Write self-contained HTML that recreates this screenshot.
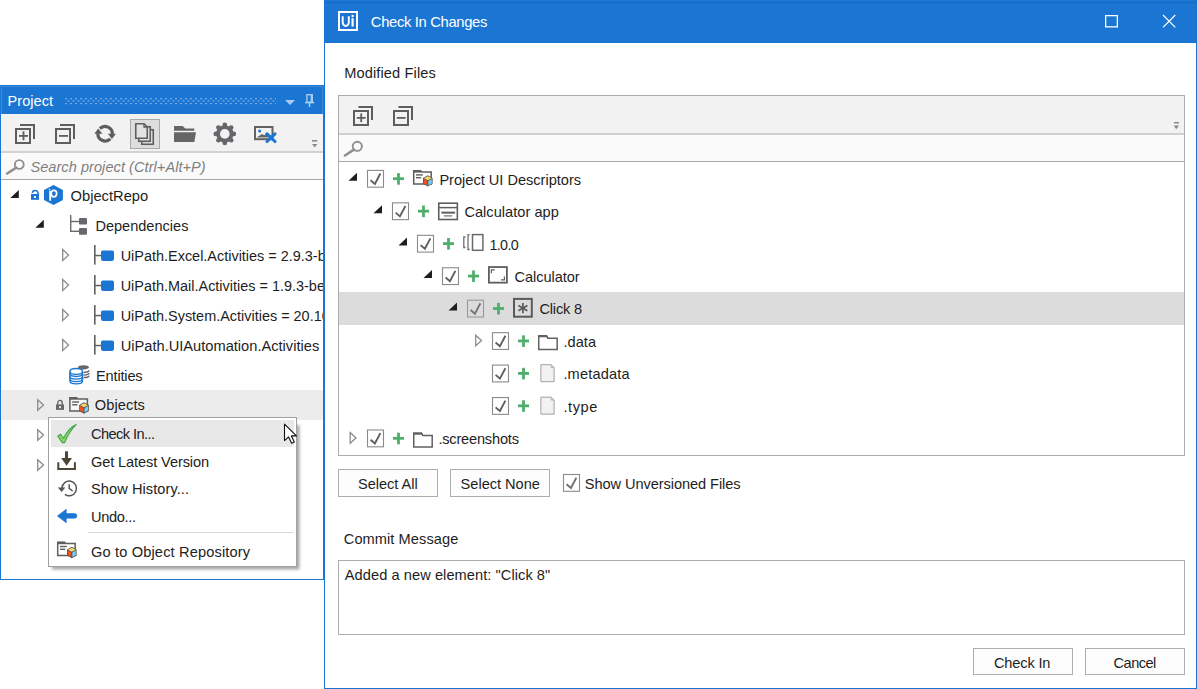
<!DOCTYPE html>
<html><head><meta charset="utf-8"><style>
html,body{margin:0;padding:0;background:#fff;width:1197px;height:689px;overflow:hidden}
svg{display:block}
text{font-family:"Liberation Sans", sans-serif;white-space:pre}
</style></head><body>
<svg width="1197" height="689" viewBox="0 0 1197 689">
<rect x="0" y="85" width="324" height="495" fill="#1a76d2" />
<rect x="1" y="86" width="322" height="493" fill="#ffffff" />
<rect x="1" y="86" width="322" height="28" fill="#1a76d2" />
<rect x="1" y="86" width="322" height="1" fill="#3f8bdb" />
<rect x="1" y="86" width="1" height="28" fill="#3f8bdb" />
<text x="7.60" y="105.6" font-size="14.5" fill="#ffffff"  textLength="45.34" lengthAdjust="spacing">Project</text>
<defs><pattern id="grip" x="65" y="98" width="5" height="5" patternUnits="userSpaceOnUse"><rect x="0" y="0" width="2" height="1.3" fill="#74aae6"/><rect x="2.5" y="2.3" width="2" height="1.3" fill="#74aae6"/></pattern></defs>
<rect x="65" y="98" width="211" height="6.5" fill="url(#grip)"/>
<path d="M285 100 L295 100 L290 105 Z" fill="#a9cbf0"/>
<rect x="306.9" y="94.7" width="5.4" height="7.6" fill="none" stroke="#a9cbf0" stroke-width="1.4"/>
<rect x="310.6" y="95" width="1.6" height="7.2" fill="#a9cbf0" />
<rect x="305" y="101.9" width="9.2" height="1.4" fill="#b4d2f2" />
<rect x="308.8" y="103" width="1.4" height="4" fill="#b4d2f2" />
<rect x="322" y="86" width="1" height="28" fill="#3f8bdb" />
<rect x="1" y="114" width="322" height="37" fill="#f2f2f2" />
<rect x="1" y="151" width="322" height="2" fill="#d2d2d2" />
<rect x="16.0" y="129.0" width="14" height="14" fill="none" stroke="#5e5e5e" stroke-width="2"/>
<rect x="20" y="124" width="15" height="2" fill="#5e5e5e" />
<rect x="33" y="124" width="2" height="15" fill="#5e5e5e" />
<rect x="19" y="135" width="9" height="1.8" fill="#5e5e5e" />
<rect x="22.6" y="131.3" width="1.8" height="9" fill="#5e5e5e" />
<rect x="56.0" y="129.0" width="14" height="14" fill="none" stroke="#5e5e5e" stroke-width="2"/>
<rect x="60" y="124" width="15" height="2" fill="#5e5e5e" />
<rect x="73" y="124" width="2" height="15" fill="#5e5e5e" />
<rect x="59" y="135" width="9" height="1.8" fill="#5e5e5e" />
<path d="M 99.89999999999999 128.5 A 7.3 7.3 0 0 1 112.3 134.29999999999998" fill="none" stroke="#5e5e5e" stroke-width="3.2"/>
<path d="M 110.3 138.89999999999998 A 7.3 7.3 0 0 1 97.89999999999999 133.1" fill="none" stroke="#5e5e5e" stroke-width="3.2"/>
<path d="M 107.89999999999999 133.7 L 115.89999999999999 133.7 L 111.89999999999999 139.0 Z" fill="#5e5e5e"/>
<path d="M 102.3 133.7 L 94.3 133.7 L 98.3 128.39999999999998 Z" fill="#5e5e5e"/>
<rect x="130" y="119" width="30" height="30" fill="#a9a9a9" />
<rect x="131" y="120" width="28" height="28" fill="#dedede" />
<rect x="141.75" y="129.75" width="11.5" height="14.5" fill="#e2e2e2" stroke="#5e5e5e" stroke-width="1.6"/>
<rect x="138.75" y="126.75" width="11.5" height="14.5" fill="#e2e2e2" stroke="#5e5e5e" stroke-width="1.6"/>
<path d="M135.75 123.75 H144 L147.25 127 V138.25 H135.75 Z" fill="#e2e2e2" stroke="#5e5e5e" stroke-width="1.6"/>
<path d="M144 123.75 V127 H147.25" fill="none" stroke="#5e5e5e" stroke-width="1.3"/>
<path d="M174 126 H182.7 L185.3 128.6 H194.3 V130.8 H174 Z" fill="#666"/>
<path d="M174 132.2 H196 L194.3 142 H174 Z" fill="#666"/>
<circle cx="224.8" cy="133.9" r="8.7" fill="#65676b"/>
<circle cx="224.80" cy="124.90" r="2.35" fill="#65676b"/>
<circle cx="231.16" cy="127.54" r="2.35" fill="#65676b"/>
<circle cx="233.80" cy="133.90" r="2.35" fill="#65676b"/>
<circle cx="231.16" cy="140.26" r="2.35" fill="#65676b"/>
<circle cx="224.80" cy="142.90" r="2.35" fill="#65676b"/>
<circle cx="218.44" cy="140.26" r="2.35" fill="#65676b"/>
<circle cx="215.80" cy="133.90" r="2.35" fill="#65676b"/>
<circle cx="218.44" cy="127.54" r="2.35" fill="#65676b"/>
<circle cx="224.8" cy="133.9" r="4.8" fill="#f2f2f2"/>
<rect x="255.0" y="127.0" width="17.5" height="12.2" fill="none" stroke="#616161" stroke-width="2"/>
<circle cx="259.6" cy="130.9" r="1.5" fill="#1a76d2"/>
<path d="M256.5 137.6 L262 134 L264.5 135.3 L266.5 132.6 L268.5 137.6 Z" fill="#666"/>
<path d="M267 133.8 L275 141.5 M275 133.8 L267 141.5" stroke="#1a76d2" stroke-width="3.1" stroke-linecap="round"/>
<rect x="312" y="140" width="5.2" height="1.6" fill="#8a8a8a" />
<path d="M312 144 H317.4 L314.7 147.6 Z" fill="#8a8a8a"/>
<rect x="1" y="153" width="322" height="26" fill="#fafafa" />
<rect x="1" y="179" width="322" height="1" fill="#a8a8a8" />
<circle cx="19.3" cy="164.5" r="4.4" fill="none" stroke="#8f8f8f" stroke-width="1.9"/>
<path d="M16.2 167.7 L7.2 173.5" stroke="#8f8f8f" stroke-width="2.6" stroke-linecap="round"/>
<text x="30.40" y="172.2" font-size="14.5" fill="#7f7f7f" font-style="italic" textLength="175.27" lengthAdjust="spacing">Search project (Ctrl+Alt+P)</text>
<clipPath id="lp"><rect x="1" y="180" width="322" height="399"/></clipPath>
<g clip-path="url(#lp)">
<rect x="1" y="390" width="322" height="30" fill="#ececec" />
<path d="M18.8 190 V198 H10.3 Z" fill="#1e1e1e"/>
<rect x="31" y="194" width="8" height="5.8" fill="#1a76d2" />
<rect x="34" y="196" width="2" height="2" fill="#ffffff" />
<path d="M32.3 192.8 A2.95 2.95 0 0 1 38.1 193.1 V194.5" fill="none" stroke="#1a76d2" stroke-width="1.5"/>
<path d="M53.5 185 L62.9 189.9 V200 L53.5 204.9 L44 200 V189.9 Z" fill="#1a76d2"/>
<path d="M50.2 200.7 V191" stroke="#fff" stroke-width="1.9"/>
<ellipse cx="53.9" cy="193.6" rx="2.75" ry="3.3" fill="none" stroke="#fff" stroke-width="1.7"/>
<circle cx="49.6" cy="189.6" r="0.8" fill="#fff"/>
<text x="70.60" y="201" font-size="14.7" fill="#1e1e1e"  textLength="77.56" lengthAdjust="spacing">ObjectRepo</text>
<path d="M43.8 219.7 V227.7 H35.3 Z" fill="#1e1e1e"/>
<rect x="70" y="215" width="1.4" height="17" fill="#66696d" />
<rect x="70" y="220.8" width="9" height="1.4" fill="#66696d" />
<rect x="70" y="230.6" width="9" height="1.4" fill="#66696d" />
<rect x="79" y="218" width="8" height="6.6" rx="1" fill="#66696d"/>
<rect x="79" y="228" width="8" height="6.8" rx="1" fill="#66696d"/>
<text x="95.40" y="230.9" font-size="14.55" fill="#1e1e1e"  textLength="93.02" lengthAdjust="spacing">Dependencies</text>
<path d="M62.7 249.5 L68.5 255.05 L62.7 260.6 Z" fill="none" stroke="#8c8c8c" stroke-width="1.3"/>
<rect x="94" y="245" width="1.6" height="19.6" fill="#606060" />
<rect x="94" y="254.8" width="7" height="1.5" fill="#606060" />
<rect x="101" y="250.5" width="13" height="10.4" rx="1.8" fill="#1a76d2"/>
<text x="120.70" y="260.9" font-size="14.45" fill="#1e1e1e" >UiPath.Excel.Activities = 2.9.3-beta</text>
<path d="M62.7 279.5 L68.5 285.05 L62.7 290.6 Z" fill="none" stroke="#8c8c8c" stroke-width="1.3"/>
<rect x="94" y="275" width="1.6" height="19.6" fill="#606060" />
<rect x="94" y="284.8" width="7" height="1.5" fill="#606060" />
<rect x="101" y="280.5" width="13" height="10.4" rx="1.8" fill="#1a76d2"/>
<text x="120.70" y="290.9" font-size="14.45" fill="#1e1e1e" >UiPath.Mail.Activities = 1.9.3-beta</text>
<path d="M62.7 309.5 L68.5 315.05 L62.7 320.6 Z" fill="none" stroke="#8c8c8c" stroke-width="1.3"/>
<rect x="94" y="305" width="1.6" height="19.6" fill="#606060" />
<rect x="94" y="314.8" width="7" height="1.5" fill="#606060" />
<rect x="101" y="310.5" width="13" height="10.4" rx="1.8" fill="#1a76d2"/>
<text x="120.70" y="320.9" font-size="14.45" fill="#1e1e1e" >UiPath.System.Activities = 20.10.0</text>
<path d="M62.7 339.5 L68.5 345.05 L62.7 350.6 Z" fill="none" stroke="#8c8c8c" stroke-width="1.3"/>
<rect x="94" y="335" width="1.6" height="19.6" fill="#606060" />
<rect x="94" y="344.8" width="7" height="1.5" fill="#606060" />
<rect x="101" y="340.5" width="13" height="10.4" rx="1.8" fill="#1a76d2"/>
<text x="120.70" y="350.9" font-size="14.65" fill="#1e1e1e" >UiPath.UIAutomation.Activities = 20.10.0</text>
<g fill="none" stroke="#1a76d2" stroke-width="1.35">
<ellipse cx="76.2" cy="371.4" rx="6.3" ry="2.9" fill="#fff"/>
<path d="M69.9 373.59999999999997 A 6.3 2.9 0 0 0 82.5 373.59999999999997"/>
<path d="M69.9 376.2 A 6.3 2.9 0 0 0 82.5 376.2"/>
<path d="M69.9 378.79999999999995 A 6.3 2.9 0 0 0 82.5 378.79999999999995"/>
<path d="M69.9 371.4 V381 A 6.3 2.9 0 0 0 82.5 381 V371.4"/>
</g>
<ellipse cx="83.5" cy="367.3" rx="5.5" ry="2.1" fill="#666"/>
<g fill="none" stroke="#666" stroke-width="1.4">
<path d="M83.5 372.40000000000003 A 5.5 2.1 0 0 0 89 370.40000000000003"/>
<path d="M83.5 375.0 A 5.5 2.1 0 0 0 89 373.0"/>
<path d="M83.5 377.6 A 5.5 2.1 0 0 0 89 375.6"/>
</g>
<text x="96.00" y="380.7" font-size="14.6" fill="#1e1e1e"  textLength="46.66" lengthAdjust="spacing">Entities</text>
<path d="M37.7 399.7 L43.5 405.0 L37.7 410.3 Z" fill="none" stroke="#8c8c8c" stroke-width="1.3"/>
<rect x="56" y="404.4" width="8" height="5.5" fill="#666" />
<rect x="59" y="406.2" width="2" height="2" fill="#ececec" />
<path d="M57.8 404.8 V402.8 A2.2 2.4 0 0 1 62.2 402.8 V404.8" fill="none" stroke="#666" stroke-width="1.4"/>
<path d="M69.9 397.90000000000003 H76.8 L78.0 399.1 H87.4 V411.1 H69.9 Z" fill="#f6f6f6" stroke="#5e5e5e" stroke-width="1.5"/>
<rect x="69.2" y="397.1" width="8" height="2.6" fill="#5e5e5e" />
<rect x="72.2" y="401.3" width="6.8" height="1.4" fill="#5e5e5e" />
<rect x="72.2" y="404.1" width="5.2" height="1.4" fill="#5e5e5e" />
<path d="M84.0 402.3 L88.8 405.0 V410.90000000000003 L84.0 413.7 L79.2 410.90000000000003 V405.0 Z" fill="#555"/>
<path d="M84.0 403.3 L87.9 405.3 L84.0 407.3 L80.1 405.3 Z" fill="#f6d865"/>
<path d="M80.0 406.1 L83.5 408.0 V412.5 L80.0 410.5 Z" fill="#f4511e"/>
<path d="M88.0 406.1 L84.5 408.0 V412.5 L88.0 410.5 Z" fill="#72cff5"/>
<text x="94.80" y="410.2" font-size="14.6" fill="#1e1e1e"  textLength="50.08" lengthAdjust="spacing">Objects</text>
<path d="M37.7 429.7 L43.5 435.0 L37.7 440.3 Z" fill="none" stroke="#8c8c8c" stroke-width="1.3"/>
<path d="M37.7 459.7 L43.5 465.0 L37.7 470.3 Z" fill="none" stroke="#8c8c8c" stroke-width="1.3"/>
</g>
<defs><filter id="sh" x="-10%" y="-10%" width="130%" height="130%"><feGaussianBlur stdDeviation="1.4"/></filter></defs>
<rect x="52" y="425" width="247.5" height="144.5" fill="#000" opacity="0.34" filter="url(#sh)"/>
<rect x="48" y="417" width="249" height="150" fill="#a0a0a0" />
<rect x="49" y="418" width="247" height="148" fill="#ffffff" />
<rect x="51" y="420" width="243" height="27" fill="#e8e8e8" />
<path d="M57.8 436.2 L60.6 434.2 L63.5 438.2 C67 431 71 426.5 76.3 424.4 C71.5 429 67.5 435.5 64.6 442.6 L62.3 442.6 Z" fill="#8fd468" stroke="#3aa84a" stroke-width="1.1" stroke-linejoin="round"/>
<text x="91.00" y="438.7" font-size="14.6" fill="#222"  textLength="63.97" lengthAdjust="spacing">Check In...</text>
<rect x="65" y="451.3" width="3" height="7.5" fill="#4b4736" />
<path d="M61.2 458 H72 L66.6 465.8 Z" fill="#4b4736"/>
<path d="M58.3 462.3 V469.1 H74.9 V462.3" fill="none" stroke="#4b4736" stroke-width="2"/>
<text x="91.00" y="466.7" font-size="14.6" fill="#222"  textLength="118.08" lengthAdjust="spacing">Get Latest Version</text>
<path d="M61.900000000000006 488.09999999999997 A 7.3 7.3 0 1 1 64.9 494.29999999999995" fill="none" stroke="#555" stroke-width="1.5"/>
<path d="M57.800000000000004 487.59999999999997 H65.4 L61.6 492.0 Z" fill="#555"/>
<path d="M69.2 484.2 V488.4 L72.60000000000001 491.0" fill="none" stroke="#555" stroke-width="1.5"/>
<text x="91.00" y="494.3" font-size="14.6" fill="#222"  textLength="98.05" lengthAdjust="spacing">Show History...</text>
<path d="M57.3 516 L66.3 509.3 V513.6 H74.6 A2.3 2.3 0 0 1 74.6 518.2 H66.3 V522.8 Z" fill="#1a76d2" stroke="#1a76d2" stroke-width="0.6" stroke-linejoin="round"/>
<text x="91.00" y="521.9" font-size="14.6" fill="#222"  textLength="45.06" lengthAdjust="spacing">Undo...</text>
<rect x="88" y="532" width="206" height="1" fill="#dadada" />
<path d="M57.7 542.4 H64.6 L65.8 543.6 H75.2 V555.6 H57.7 Z" fill="#fff" stroke="#5e5e5e" stroke-width="1.5"/>
<rect x="57" y="541.6" width="8" height="2.6" fill="#5e5e5e" />
<rect x="60" y="545.8000000000001" width="6.8" height="1.4" fill="#5e5e5e" />
<rect x="60" y="548.6" width="5.2" height="1.4" fill="#5e5e5e" />
<path d="M71.8 546.8000000000001 L76.6 549.5000000000001 V555.4000000000001 L71.8 558.2 L67.0 555.4000000000001 V549.5000000000001 Z" fill="#555"/>
<path d="M71.8 547.8000000000001 L75.7 549.8000000000001 L71.8 551.8000000000001 L67.89999999999999 549.8000000000001 Z" fill="#f6d865"/>
<path d="M67.8 550.6 L71.3 552.5000000000001 V557.0000000000001 L67.8 555.0000000000001 Z" fill="#f4511e"/>
<path d="M75.8 550.6 L72.3 552.5000000000001 V557.0000000000001 L75.8 555.0000000000001 Z" fill="#72cff5"/>
<text x="91.00" y="557" font-size="14.6" fill="#222"  textLength="159.15" lengthAdjust="spacing">Go to Object Repository</text>
<path d="M284.5 424.2 V440.6 L288.6 436.9 L291.6 443.2 L294.3 442 L291.4 435.9 L296.4 435.9 Z" fill="#fff" stroke="#111" stroke-width="1.1" stroke-linejoin="round"/>
<rect x="324" y="0" width="873" height="689" fill="#1a76d2" />
<rect x="325" y="43" width="871" height="645" fill="#ffffff" />
<rect x="324" y="2" width="872" height="1" fill="#1767bb" />
<rect x="339.0" y="12.0" width="18" height="18" fill="none" stroke="#fff" stroke-width="2"/>
<path d="M342.7 16.2 V22.6 A3 3.3 0 0 0 348.8 22.6 V16.2" fill="none" stroke="#fff" stroke-width="1.9"/>
<rect x="351.5" y="18.2" width="2.2" height="8.4" fill="#fff" />
<circle cx="352.6" cy="16" r="1.2" fill="#fff"/>
<text x="370.80" y="26.7" font-size="14.8" fill="#ffffff"  textLength="116.55" lengthAdjust="spacing">Check In Changes</text>
<rect x="1105.65" y="15.65" width="11.7" height="11.2" fill="none" stroke="#fff" stroke-width="1.3"/>
<path d="M1163 15 L1175.3 27.3 M1175.3 15 L1163 27.3" stroke="#fff" stroke-width="1.2"/>
<text x="344.20" y="77.5" font-size="14.6" fill="#1e1e1e"  textLength="91.63" lengthAdjust="spacing">Modified Files</text>
<rect x="338" y="95" width="847" height="361" fill="#acacac" />
<rect x="339" y="96" width="845" height="359" fill="#ffffff" />
<rect x="339" y="96" width="845" height="37" fill="#f2f2f2" />
<rect x="339" y="133" width="845" height="2" fill="#d0d0d0" />
<rect x="354.0" y="111.0" width="14" height="14" fill="none" stroke="#5e5e5e" stroke-width="2"/>
<rect x="358.5" y="106" width="14.5" height="2" fill="#5e5e5e" />
<rect x="371" y="106" width="2" height="14" fill="#5e5e5e" />
<rect x="356.8" y="117" width="8.8" height="1.8" fill="#5e5e5e" />
<rect x="360.3" y="113.5" width="1.8" height="8.6" fill="#5e5e5e" />
<rect x="394.0" y="111.0" width="14" height="14" fill="none" stroke="#5e5e5e" stroke-width="2"/>
<rect x="398.5" y="106" width="14.5" height="2" fill="#5e5e5e" />
<rect x="411" y="106" width="2" height="14" fill="#5e5e5e" />
<rect x="396.8" y="117" width="8.8" height="1.8" fill="#5e5e5e" />
<rect x="1174" y="122" width="5" height="1.5" fill="#8a8a8a" />
<path d="M1173.6 125.5 H1179 L1176.3 129.3 Z" fill="#8a8a8a"/>
<rect x="339" y="135" width="845" height="26" fill="#fafafa" />
<rect x="339" y="161" width="845" height="1" fill="#a8a8a8" />
<circle cx="357.3" cy="146.3" r="4.6" fill="none" stroke="#8f8f8f" stroke-width="1.9"/>
<path d="M353.9 149.7 L345 155.5" stroke="#8f8f8f" stroke-width="2.6" stroke-linecap="round"/>
<clipPath id="tb"><rect x="339" y="162" width="845" height="293"/></clipPath>
<g clip-path="url(#tb)">
<rect x="339" y="292" width="845" height="33" fill="#dcdcdc" />
<path d="M357.0 172.70000000000002 V180.70000000000002 H348.5 Z" fill="#1e1e1e"/>
<rect x="367.5" y="170.4" width="16" height="16.8" fill="#fff" stroke="#8a8a8a" stroke-width="1.1"/>
<path d="M370.6 180.20000000000002 L374.9 183.9 L380.4 173.5" fill="none" stroke="#5f5f5f" stroke-width="1.9"/>
<rect x="393" y="177.3" width="11" height="2.8" fill="#4fae6c" />
<rect x="397.1" y="173.10000000000002" width="2.8" height="11.6" fill="#4fae6c" />
<path d="M413.7 170.8 H420.6 L421.8 172.0 H431.2 V184.0 H413.7 Z" fill="#fff" stroke="#5e5e5e" stroke-width="1.5"/>
<rect x="413" y="170.0" width="8" height="2.6" fill="#5e5e5e" />
<rect x="416" y="174.2" width="6.8" height="1.4" fill="#5e5e5e" />
<rect x="416" y="177.0" width="5.2" height="1.4" fill="#5e5e5e" />
<path d="M427.8 175.2 L432.6 177.89999999999998 V183.79999999999998 L427.8 186.6 L423.0 183.79999999999998 V177.89999999999998 Z" fill="#555"/>
<path d="M427.8 176.2 L431.7 178.2 L427.8 180.2 L423.90000000000003 178.2 Z" fill="#f6d865"/>
<path d="M423.8 179.0 L427.3 180.89999999999998 V185.39999999999998 L423.8 183.39999999999998 Z" fill="#f4511e"/>
<path d="M431.8 179.0 L428.3 180.89999999999998 V185.39999999999998 L431.8 183.39999999999998 Z" fill="#72cff5"/>
<text x="439.40" y="184.60000000000002" font-size="14.6" fill="#1e1e1e"  textLength="141.72" lengthAdjust="spacing">Project UI Descriptors</text>
<path d="M382.0 205.15 V213.15 H373.5 Z" fill="#1e1e1e"/>
<rect x="392.5" y="202.85" width="16" height="16.8" fill="#fff" stroke="#8a8a8a" stroke-width="1.1"/>
<path d="M395.6 212.65 L399.9 216.35 L405.4 205.95" fill="none" stroke="#5f5f5f" stroke-width="1.9"/>
<rect x="418" y="209.75" width="11" height="2.8" fill="#4fae6c" />
<rect x="422.1" y="205.55" width="2.8" height="11.6" fill="#4fae6c" />
<rect x="438.75" y="203.2" width="18.6" height="16.3" fill="#fff" stroke="#5e5e5e" stroke-width="1.6"/>
<rect x="439" y="206.85" width="18" height="1.5" fill="#5e5e5e" />
<rect x="441.4" y="211.65" width="13.7" height="2" fill="#5e5e5e" />
<rect x="443.9" y="215.15" width="8.3" height="1.5" fill="#8a8a8a" />
<text x="464.40" y="217.05" font-size="14.6" fill="#1e1e1e"  textLength="94.41" lengthAdjust="spacing">Calculator app</text>
<path d="M407.0 237.60000000000002 V245.60000000000002 H398.5 Z" fill="#1e1e1e"/>
<rect x="417.5" y="235.3" width="16" height="16.8" fill="#fff" stroke="#8a8a8a" stroke-width="1.1"/>
<path d="M420.6 245.10000000000002 L424.9 248.8 L430.4 238.4" fill="none" stroke="#5f5f5f" stroke-width="1.9"/>
<rect x="443" y="242.20000000000002" width="11" height="2.8" fill="#4fae6c" />
<rect x="447.1" y="238.00000000000003" width="2.8" height="11.6" fill="#4fae6c" />
<path d="M465.5 237.00000000000003 H463.8 V247.50000000000003 H465.5" fill="none" stroke="#707070" stroke-width="1.3"/>
<path d="M469.7 234.70000000000002 H468 V249.50000000000003 H469.7" fill="none" stroke="#707070" stroke-width="1.3"/>
<rect x="472.5" y="234.60000000000002" width="10.4" height="15.7" fill="none" stroke="#6a6a6a" stroke-width="1.5"/>
<text x="489.40" y="249.50000000000003" font-size="14.3" fill="#1e1e1e"  textLength="29.31" lengthAdjust="spacing">1.0.0</text>
<path d="M432.0 270.05 V278.05 H423.5 Z" fill="#1e1e1e"/>
<rect x="442.5" y="267.75000000000006" width="16" height="16.8" fill="#fff" stroke="#8a8a8a" stroke-width="1.1"/>
<path d="M445.6 277.55000000000007 L449.9 281.25000000000006 L455.4 270.8500000000001" fill="none" stroke="#5f5f5f" stroke-width="1.9"/>
<rect x="468" y="274.65000000000003" width="11" height="2.8" fill="#4fae6c" />
<rect x="472.1" y="270.45000000000005" width="2.8" height="11.6" fill="#4fae6c" />
<rect x="488.9" y="267.05" width="18" height="15.6" fill="#fff" stroke="#5e5e5e" stroke-width="1.8"/>
<path d="M491.4 273.35 V269.85 H494.8" fill="none" stroke="#5e5e5e" stroke-width="1.2"/>
<path d="M501 279.85 H504.4 V276.45000000000005" fill="none" stroke="#5e5e5e" stroke-width="1.2"/>
<text x="514.40" y="281.95000000000005" font-size="14.6" fill="#1e1e1e"  textLength="65.30" lengthAdjust="spacing">Calculator</text>
<path d="M457.0 302.5 V310.5 H448.5 Z" fill="#1e1e1e"/>
<rect x="467.5" y="300.20000000000005" width="16" height="16.8" fill="#dcdcdc" stroke="#999" stroke-width="1.1"/>
<path d="M470.6 310.00000000000006 L474.9 313.70000000000005 L480.4 303.30000000000007" fill="none" stroke="#777" stroke-width="1.9"/>
<rect x="493" y="307.1" width="11" height="2.8" fill="#4fae6c" />
<rect x="497.1" y="302.90000000000003" width="2.8" height="11.6" fill="#4fae6c" />
<rect x="514" y="298.90000000000003" width="17.8" height="17.8" fill="none" stroke="#5a5a5a" stroke-width="2"/>
<path d="M522.90 302.90 L522.90 313.30" stroke="#5a5a5a" stroke-width="1.7"/>
<path d="M518.40 305.50 L527.40 310.70" stroke="#5a5a5a" stroke-width="1.7"/>
<path d="M518.40 310.70 L527.40 305.50" stroke="#5a5a5a" stroke-width="1.7"/>
<text x="539.40" y="314.40000000000003" font-size="14.6" fill="#1e1e1e"  textLength="42.70" lengthAdjust="spacing">Click 8</text>
<path d="M475.7 335.25 L481.5 340.55 L475.7 345.85 Z" fill="none" stroke="#8c8c8c" stroke-width="1.3"/>
<rect x="492.5" y="332.65000000000003" width="16" height="16.8" fill="#fff" stroke="#8a8a8a" stroke-width="1.1"/>
<path d="M495.6 342.45000000000005 L499.9 346.15000000000003 L505.4 335.75000000000006" fill="none" stroke="#5f5f5f" stroke-width="1.9"/>
<rect x="518" y="339.55" width="11" height="2.8" fill="#4fae6c" />
<rect x="522.1" y="335.35" width="2.8" height="11.6" fill="#4fae6c" />
<path d="M538.75 335.85 V349.55 H557.2 V338.15000000000003 H547.8 L546.6 335.85 Z" fill="#fff" stroke="#626262" stroke-width="1.5"/>
<path d="M538 335.25 H546.8 L548.1 337.35 H538 Z" fill="#626262"/>
<text x="563.40" y="346.85" font-size="14.6" fill="#1e1e1e"  textLength="32.67" lengthAdjust="spacing">.data</text>
<rect x="492.5" y="365.1" width="16" height="16.8" fill="#fff" stroke="#8a8a8a" stroke-width="1.1"/>
<path d="M495.6 374.90000000000003 L499.9 378.6 L505.4 368.20000000000005" fill="none" stroke="#5f5f5f" stroke-width="1.9"/>
<rect x="518" y="372.0" width="11" height="2.8" fill="#4fae6c" />
<rect x="522.1" y="367.8" width="2.8" height="11.6" fill="#4fae6c" />
<path d="M540.9 364.7 H551.1999999999999 L554.1 367.59999999999997 V381.7 H540.9 Z" fill="#f2f2f2" stroke="#a0a0a0" stroke-width="1"/>
<path d="M551.1999999999999 364.7 V367.59999999999997 H554.1" fill="none" stroke="#b0b0b0" stroke-width="1"/>
<text x="563.40" y="379.3" font-size="14.6" fill="#1e1e1e"  textLength="66.11" lengthAdjust="spacing">.metadata</text>
<rect x="492.5" y="397.55000000000007" width="16" height="16.8" fill="#fff" stroke="#8a8a8a" stroke-width="1.1"/>
<path d="M495.6 407.3500000000001 L499.9 411.05000000000007 L505.4 400.6500000000001" fill="none" stroke="#5f5f5f" stroke-width="1.9"/>
<rect x="518" y="404.45000000000005" width="11" height="2.8" fill="#4fae6c" />
<rect x="522.1" y="400.25000000000006" width="2.8" height="11.6" fill="#4fae6c" />
<path d="M540.9 397.15000000000003 H551.1999999999999 L554.1 400.05 V414.15000000000003 H540.9 Z" fill="#f2f2f2" stroke="#a0a0a0" stroke-width="1"/>
<path d="M551.1999999999999 397.15000000000003 V400.05 H554.1" fill="none" stroke="#b0b0b0" stroke-width="1"/>
<text x="563.40" y="411.75000000000006" font-size="14.6" fill="#1e1e1e"  textLength="33.94" lengthAdjust="spacing">.type</text>
<path d="M350.2 432.6 L356.0 437.90000000000003 L350.2 443.20000000000005 Z" fill="none" stroke="#8c8c8c" stroke-width="1.3"/>
<rect x="367.5" y="430.00000000000006" width="16" height="16.8" fill="#fff" stroke="#8a8a8a" stroke-width="1.1"/>
<path d="M370.6 439.80000000000007 L374.9 443.50000000000006 L380.4 433.1000000000001" fill="none" stroke="#5f5f5f" stroke-width="1.9"/>
<rect x="393" y="436.90000000000003" width="11" height="2.8" fill="#4fae6c" />
<rect x="397.1" y="432.70000000000005" width="2.8" height="11.6" fill="#4fae6c" />
<path d="M413.75 433.20000000000005 V446.90000000000003 H432.2 V435.50000000000006 H422.8 L421.6 433.20000000000005 Z" fill="#fff" stroke="#626262" stroke-width="1.5"/>
<path d="M413 432.6 H421.8 L423.1 434.70000000000005 H413 Z" fill="#626262"/>
<text x="438.40" y="444.20000000000005" font-size="14.6" fill="#1e1e1e"  textLength="80.55" lengthAdjust="spacing">.screenshots</text>
</g>
<rect x="338" y="469" width="100" height="28" fill="#adadad" />
<rect x="339" y="470" width="98" height="26" fill="#fdfdfd" />
<text x="358.00" y="489" font-size="14.6" fill="#1e1e1e"  textLength="59.63" lengthAdjust="spacing">Select All</text>
<rect x="450" y="469" width="100" height="28" fill="#adadad" />
<rect x="451" y="470" width="98" height="26" fill="#fdfdfd" />
<text x="460.60" y="489" font-size="14.6" fill="#1e1e1e"  textLength="79.32" lengthAdjust="spacing">Select None</text>
<rect x="563.5" y="474.5" width="16" height="16.8" fill="#fff" stroke="#8a8a8a" stroke-width="1.1"/>
<path d="M566.6 484.3 L570.9 488 L576.4 477.6" fill="none" stroke="#707070" stroke-width="1.9"/>
<text x="584.80" y="488.8" font-size="14.6" fill="#1e1e1e"  textLength="155.78" lengthAdjust="spacing">Show Unversioned Files</text>
<text x="343.80" y="544" font-size="14.6" fill="#1e1e1e"  textLength="114.45" lengthAdjust="spacing">Commit Message</text>
<rect x="338" y="560" width="847" height="75" fill="#acacac" />
<rect x="339" y="561" width="845" height="73" fill="#ffffff" />
<text x="344.80" y="579.8" font-size="14.6" fill="#1e1e1e"  textLength="205.44" lengthAdjust="spacing">Added a new element: &quot;Click 8&quot;</text>
<rect x="973" y="648" width="100" height="27" fill="#adadad" />
<rect x="974" y="649" width="98" height="25" fill="#fdfdfd" />
<text x="994.00" y="668" font-size="14.6" fill="#1e1e1e"  textLength="56.39" lengthAdjust="spacing">Check In</text>
<rect x="1085" y="648" width="100" height="27" fill="#adadad" />
<rect x="1086" y="649" width="98" height="25" fill="#fdfdfd" />
<text x="1113.60" y="668" font-size="14.6" fill="#1e1e1e"  textLength="42.64" lengthAdjust="spacing">Cancel</text>
</svg></body></html>
